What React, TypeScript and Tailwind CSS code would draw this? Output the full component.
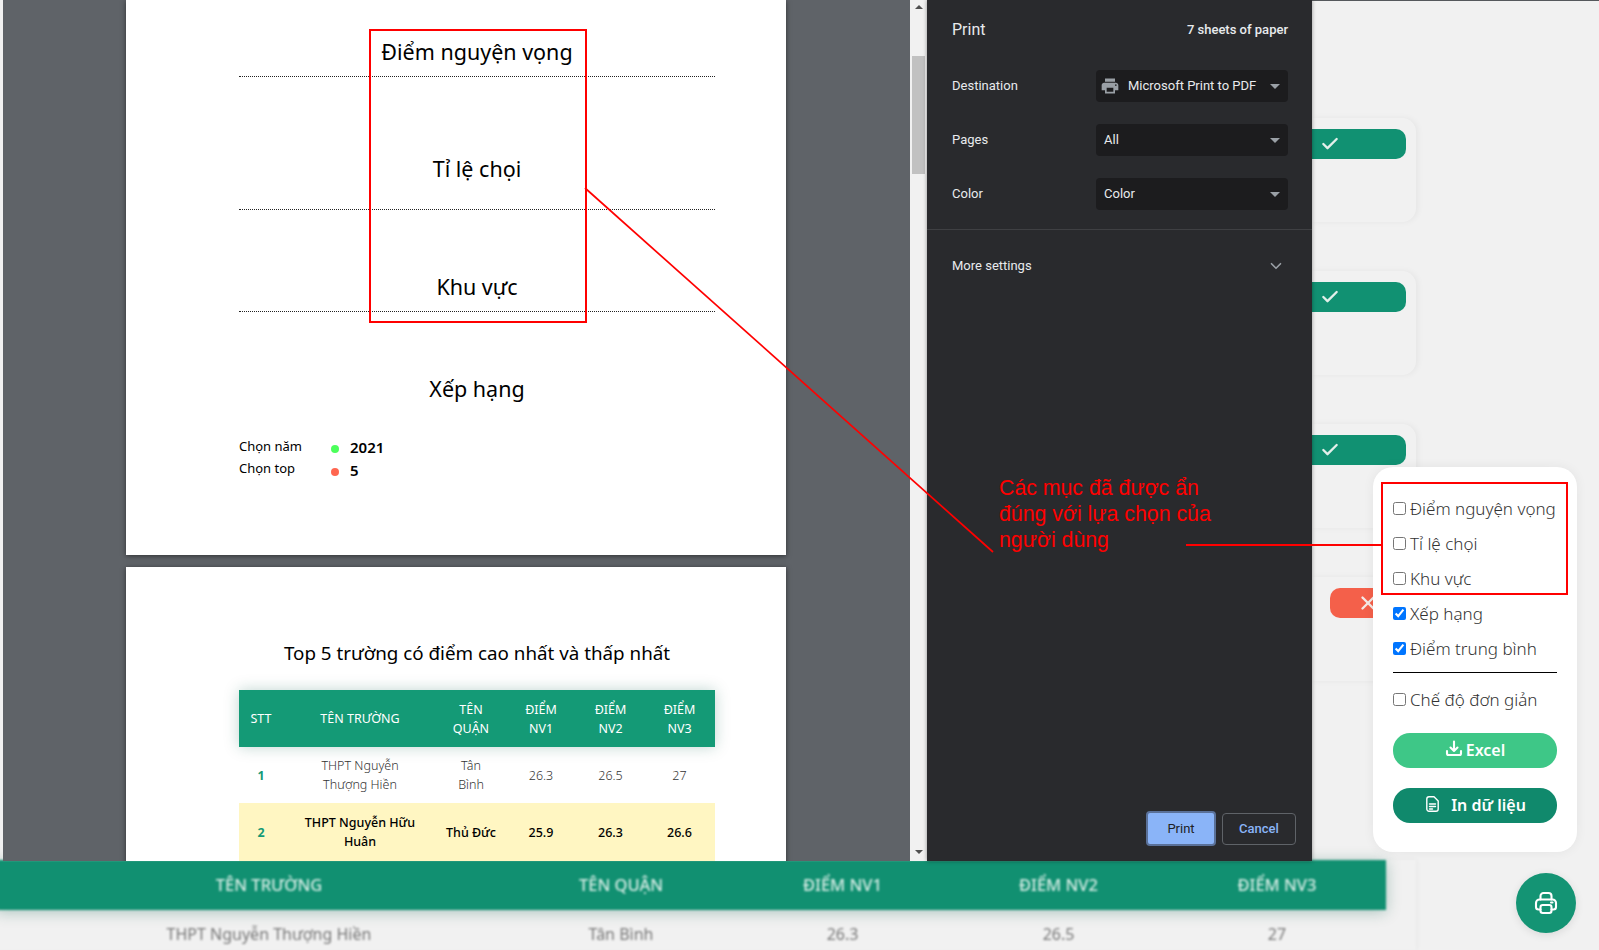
import React from "react";
import { Check, X, ChevronDown } from "lucide-react";

const docFont = "font-['Noto_Sans',sans-serif]";

function Caret() {
  return <span className="ml-auto mr-[8px] h-0 w-0 border-x-[5px] border-t-[5px] border-x-transparent border-t-[#9aa0a6]" />;
}

function Row({ label, value, icon }: { label: string; value: string; icon?: boolean }) {
  return (
    <div className="mt-[22px] flex h-[32px] items-center justify-between">
      <span>{label}</span>
      <div className="flex h-[32px] w-[192px] items-center rounded-[4px] bg-[#1c1c1e] pl-[8px] text-[#e8eaed]">
        {icon && (
          <svg viewBox="0 0 24 24" className="-ml-[4px] mr-[8px] h-[20px] w-[20px] fill-[#9aa0a6]">
            <path d="M19 8H5c-1.66 0-3 1.34-3 3v6h4v4h12v-4h4v-6c0-1.66-1.34-3-3-3zm-3 11H8v-5h8v5zm3-7c-.55 0-1-.45-1-1s.45-1 1-1 1 .45 1 1-.45 1-1 1zm-1-9H6v4h12V3z" />
          </svg>
        )}
        <span>{value}</span>
        <Caret />
      </div>
    </div>
  );
}

function Card({ red }: { red?: boolean }) {
  return (
    <div className="h-[104px] w-[104px] rounded-r-[14px] pt-[11px] shadow-[2px_0_6px_rgba(0,0,0,0.05)]">
      {red ? (
        <div className="ml-[18px] flex h-[30px] w-[76px] items-center justify-center rounded-[10px] bg-[#f4604a] text-[#f4e9e6]">
          <X size={22} strokeWidth={2.6} />
        </div>
      ) : (
        <div className="flex h-[30px] w-[94px] items-center rounded-r-[10px] bg-[#119172] pl-[8px] text-[#e3efea]">
          <Check size={20} strokeWidth={2.8} />
        </div>
      )}
    </div>
  );
}

function Opt({ label, checked }: { label: string; checked?: boolean }) {
  return (
    <label className="flex h-[35px] items-center text-[17px] font-light text-[#333]">
      <input type="checkbox" defaultChecked={checked} className="mr-[4px] h-[13px] w-[13px] shrink-0 accent-[#0075ff]" />
      <span className="whitespace-nowrap">{label}</span>
    </label>
  );
}

const rows = [
  { n: "1", s: ["THPT Nguyễn", "Thượng Hiền"], q: ["Tân", "Bình"], a: "26.3", b: "26.5", c: "27", hi: false },
  { n: "2", s: ["THPT Nguyễn Hữu", "Huân"], q: ["Thủ Đức"], a: "25.9", b: "26.3", c: "26.6", hi: true },
];

const bottomCols = "grid w-[1390px] grid-cols-[474px_230px_213px_219px_218px] items-center pl-[36px] text-center";

export default function App() {
  return (
    <div className="relative h-[950px] w-[1599px] overflow-hidden bg-[#f1f1f1]">
      <div className="relative z-10 flex h-[861px]">
        <div className="w-[3px]" />
        {/* preview */}
        <div className={`flex w-[907px] flex-col items-center overflow-hidden bg-[#5f6368] pr-[1px] ${docFont} text-black`}>
          <div className="h-[555px] w-[660px] shrink-0 bg-white pl-[113px] pr-[71px] shadow-[0_1px_5px_rgba(0,0,0,0.5)]">
            <div className="flex h-[77px] items-end justify-center border-b border-dotted border-[#222] pb-[9px] text-[21.5px] leading-[30px]">Điểm nguyện vọng</div>
            <div className="flex h-[133px] items-end justify-center border-b border-dotted border-[#222] pb-[25px] text-[21.5px] leading-[30px]">Tỉ lệ chọi</div>
            <div className="flex h-[102px] items-end justify-center border-b border-dotted border-[#222] pb-[9px] text-[21.5px] leading-[30px]">Khu vực</div>
            <div className="mt-[62px] text-center text-[21.5px] leading-[30px]">Xếp hạng</div>
            <div className="mt-[32px] grid grid-cols-[91px_20px_1fr] items-center gap-y-[1px] text-[13px] leading-[21px]">
              <span>Chọn năm</span>
              <span className="ml-[1px] h-[8px] w-[8px] translate-y-[2px] rounded-full bg-[#4cff5b] blur-[0.6px]" />
              <span className="translate-y-[1px] text-[15px] font-semibold">2021</span>
              <span>Chọn top</span>
              <span className="ml-[1px] h-[8px] w-[8px] translate-y-[3px] rounded-full bg-[#ff6650] blur-[0.6px]" />
              <span className="translate-y-[2px] text-[15px] font-semibold">5</span>
            </div>
          </div>
          <div className="mt-[12px] w-[660px] shrink-0 bg-white pb-[40px] pl-[113px] pr-[71px] shadow-[0_1px_5px_rgba(0,0,0,0.5)]">
            <div className="pt-[72px] text-center text-[18.8px] leading-[28px]">Top 5 trường có điểm cao nhất và thấp nhất</div>
            <table className="mt-[23px] w-[476px] table-fixed border-collapse text-center text-[12.5px] leading-[19px]">
              <colgroup>
                <col className="w-[44px]" />
                <col className="w-[154px]" />
                <col className="w-[68px]" />
                <col className="w-[72px]" />
                <col className="w-[67px]" />
                <col className="w-[71px]" />
              </colgroup>
              <thead>
                <tr className="h-[57px] bg-[#149a76] text-white shadow-[0_0_14px_rgba(0,90,70,0.25)]">
                  <th className="font-normal">STT</th>
                  <th className="font-normal">TÊN TRƯỜNG</th>
                  <th className="px-[10px] font-normal">TÊN QUẬN</th>
                  <th className="px-[14px] font-normal">ĐIỂM NV1</th>
                  <th className="px-[12px] font-normal">ĐIỂM NV2</th>
                  <th className="px-[14px] font-normal">ĐIỂM NV3</th>
                </tr>
              </thead>
              <tbody>
                {rows.map((r) => (
                  <tr key={r.n} className={r.hi ? "h-[58px] bg-[#fff6c2] font-medium text-black" : "h-[56px] font-light text-[#333]"}>
                    <td className="font-bold text-[#149a76]">{r.n}</td>
                    <td>
                      {r.s.map((t) => (
                        <div key={t}>{t}</div>
                      ))}
                    </td>
                    <td>
                      {r.q.map((t) => (
                        <div key={t}>{t}</div>
                      ))}
                    </td>
                    <td>{r.a}</td>
                    <td>{r.b}</td>
                    <td>{r.c}</td>
                  </tr>
                ))}
              </tbody>
            </table>
          </div>
        </div>
        {/* scrollbar */}
        <div className="relative flex w-[17px] flex-col items-center justify-between bg-[#f1f1f1] pb-[7px] pt-[5px]">
          <span className="h-0 w-0 border-x-[4px] border-b-[4px] border-x-transparent border-b-[#505050]" />
          <div className="absolute left-[2px] right-[2px] top-[56px] h-[118px] bg-[#c1c1c1]" />
          <span className="h-0 w-0 border-x-[4px] border-t-[4px] border-x-transparent border-t-[#505050]" />
        </div>
        {/* sidebar */}
        <div className="relative z-10 flex w-[385px] flex-col bg-[#292a2d] font-['Roboto',sans-serif] text-[13px] text-[#e8eaed] shadow-[0_0_4px_rgba(0,0,0,0.4)]">
          <div className="pl-[25px] pr-[24px] pt-[19px]">
            <div className="flex h-[22px] items-center justify-between">
              <span className="text-[16px]">Print</span>
              <span className="text-[13px] font-medium">7 sheets of paper</span>
            </div>
            <div className="pt-[7px]">
              <Row label="Destination" value="Microsoft Print to PDF" icon />
              <Row label="Pages" value="All" />
              <Row label="Color" value="Color" />
            </div>
          </div>
          <div className="mt-[19px] border-t border-[#3f4043]" />
          <div className="flex h-[71px] items-center justify-between pl-[25px] pr-[27px]">
            <span>More settings</span>
            <ChevronDown size={18} strokeWidth={2.2} className="text-[#9aa0a6]" />
          </div>
          <div className="mt-auto flex items-center justify-end gap-[6px] pb-[15px] pr-[16px]">
            <button className="h-[35px] w-[70px] rounded-[4px] border-2 border-[#5a7199] bg-[#8ab4f8] text-[#202124]">Print</button>
            <button className="h-[32px] w-[74px] rounded-[4px] border border-[#5f6368] font-medium text-[#8ab4f8]">Cancel</button>
          </div>
        </div>
        {/* blurred page behind */}
        <div className="flex-1 border-t border-[#55585c] blur-[0.7px]">
          <div className="flex flex-col gap-[49px] pt-[117px]">
            <Card />
            <Card />
            <Card />
            <Card red />
          </div>
        </div>
      </div>

      {/* blurred table behind */}
      <div className={`-ml-[4px] -mt-[1px] h-[90px] w-[1420px] blur-[0.8px] shadow-[1px_0_5px_rgba(0,0,0,0.05)] ${docFont}`}>
        <div className={`${bottomCols} h-[50px] bg-[#119071] pt-[1px] text-[16.5px] font-medium text-[#d8eee7] shadow-[0_2px_14px_rgba(0,90,70,0.3)]`}>
          <span>TÊN TRƯỜNG</span>
          <span>TÊN QUẬN</span>
          <span>ĐIỂM NV1</span>
          <span>ĐIỂM NV2</span>
          <span>ĐIỂM NV3</span>
        </div>
        <div className={`${bottomCols} h-[48px] text-[16px] text-[#777]`}>
          <span>THPT Nguyễn Thượng Hiền</span>
          <span>Tân Bình</span>
          <span>26.3</span>
          <span>26.5</span>
          <span>27</span>
        </div>
      </div>

      {/* options popup */}
      <div className={`absolute left-[1373px] top-[467px] z-20 w-[204px] rounded-[20px] bg-white px-[20px] pb-[29px] pt-[24px] shadow-[0_0_12px_rgba(0,0,0,0.06)] ${docFont}`}>
        <Opt label="Điểm nguyện vọng" />
        <Opt label="Tỉ lệ chọi" />
        <Opt label="Khu vực" />
        <Opt label="Xếp hạng" checked />
        <Opt label="Điểm trung bình" checked />
        <div className="mt-[6px] border-t border-black" />
        <div className="mt-[9px]">
          <Opt label="Chế độ đơn giản" />
        </div>
        <button className="mt-[16px] flex h-[35px] w-full items-center justify-center gap-[3px] rounded-[17px] bg-[#3ec787] pb-[2px] text-[16px] font-semibold text-white">
          <svg viewBox="0 0 18 18" className="mb-[2px] h-[18px] w-[18px]" fill="none" stroke="currentColor" strokeWidth="2.1" strokeLinecap="round" strokeLinejoin="round">
            <path d="M9 1.5v9.5M5.5 7.5 9 11l3.5-3.5M2 11v2.5A1.5 1.5 0 0 0 3.5 15h11a1.5 1.5 0 0 0 1.5-1.5V11" />
          </svg>
          Excel
        </button>
        <button className="mt-[20px] flex h-[35px] w-full items-center justify-center gap-[12px] rounded-[17px] bg-[#10896c] pb-[2px] pl-[2px] text-[16px] font-semibold text-white">
          <svg viewBox="0 0 13 16" className="mb-[2px] h-[16px] w-[13px]" fill="none" stroke="currentColor" strokeWidth="1.4" strokeLinecap="round" strokeLinejoin="round">
            <path d="M3 .8h5l4.2 4.2v8a2.2 2.2 0 0 1-2.2 2.2H3A2.2 2.2 0 0 1 .8 13V3A2.2 2.2 0 0 1 3 .8zM3.5 8h6M3.5 10.5h6M3.5 13h3" />
          </svg>
          In dữ liệu
        </button>
      </div>

      {/* floating print button */}
      <div className="absolute left-[1516px] top-[873px] z-20 flex h-[60px] w-[60px] items-center justify-center rounded-full bg-[#149474] text-white shadow-[0_2px_8px_rgba(0,0,0,0.1)]">
        <svg viewBox="0 0 24 24" className="h-[24px] w-[24px]" fill="none" stroke="currentColor" strokeWidth="2.1" strokeLinecap="round" strokeLinejoin="round">
          <path d="M6.5 8.5V5a3 3 0 0 1 3-3h5a3 3 0 0 1 3 3v3.5" />
          <path d="M6.5 18.5H4.5A2.5 2.5 0 0 1 2 16v-4a3.5 3.5 0 0 1 3.5-3.5h13A3.5 3.5 0 0 1 22 12v4a2.5 2.5 0 0 1-2.5 2.5h-2" />
          <rect x="6.5" y="14" width="11" height="8" rx="2.2" />
          <path d="M17 11.5h1.5" />
        </svg>
      </div>

      {/* annotations */}
      <div className="absolute left-[369px] top-[29px] z-30 h-[294px] w-[218px] border-2 border-[#ff0000]" />
      <div className="absolute left-[1381px] top-[482px] z-30 h-[113px] w-[187px] border-2 border-[#ff0000]" />
      <div className="absolute left-[1186px] top-[544px] z-30 h-[2px] w-[195px] bg-[#ff0000]" />
      <svg className="absolute left-[580px] top-[180px] z-30 h-[380px] w-[420px]" viewBox="0 0 420 380">
        <line x1="5" y1="8" x2="413" y2="372" stroke="#ff0000" strokeWidth="1.7" />
      </svg>
      <div className="absolute left-[999px] top-[475px] z-30 w-[240px] font-['Liberation_Sans',sans-serif] text-[21.3px] leading-[26px] text-[#ff0000]">
        Các mục đã được ẩn đúng với lựa chọn của người dùng
      </div>
    </div>
  );
}
